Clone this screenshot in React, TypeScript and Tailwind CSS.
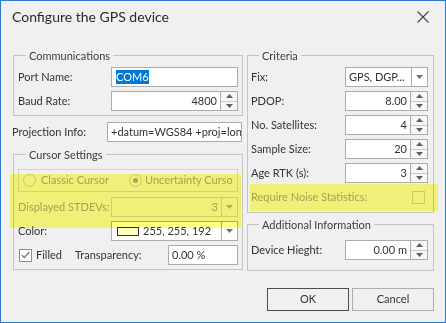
import React from "react";

const Up = () => (
  <svg width="7" height="4" viewBox="0 0 7 4" className="block">
    <path d="M0 4 L3.5 0 L7 4 Z" fill="#606060" />
  </svg>
);
const Down = ({ color = "#606060" }: { color?: string }) => (
  <svg width="7" height="4" viewBox="0 0 7 4" className="block">
    <path d="M0 0 L7 0 L3.5 4 Z" fill={color} />
  </svg>
);

function Spin({ value, w }: { value: string; w: string }) {
  return (
    <div className={`flex h-[20px] ${w}`}>
      <div className="flex-1 border border-[#acacac] bg-white pr-[3px] text-right leading-[18px]">{value}</div>
      <div className="flex w-[17px] flex-col border border-l-0 border-[#acacac] bg-[#f7f7f7]">
        <div className="flex flex-1 items-center justify-center border-b border-[#c8c8c8]">
          <Up />
        </div>
        <div className="flex flex-1 items-center justify-center">
          <Down />
        </div>
      </div>
    </div>
  );
}

function Combo({ children, w, disabled }: { children: React.ReactNode; w: string; disabled?: boolean }) {
  return (
    <div className={`flex h-[20px] ${w} border ${disabled ? "border-[#cfcfcf] bg-[#f0f0f0]" : "border-[#acacac] bg-white"}`}>
      <div className="flex min-w-0 flex-1 items-center overflow-hidden whitespace-nowrap">{children}</div>
      <div className={`flex w-[16px] items-center justify-center border-l ${disabled ? "border-[#cfcfcf]" : "border-[#acacac]"}`}>
        <Down color={disabled ? "#b0b0b0" : "#707070"} />
      </div>
    </div>
  );
}

function Row({ label, children, labelW }: { label: string; children: React.ReactNode; labelW: string }) {
  return (
    <div className="flex h-[20px] items-center">
      <div className={`${labelW} shrink-0`}>{label}</div>
      {children}
    </div>
  );
}

function Group({ title, children, className = "" }: { title: string; children: React.ReactNode; className?: string }) {
  return (
    <fieldset className={`min-w-0 border border-[#c4c4c4] ${className}`}>
      <legend className="ml-[8px] px-[3px] leading-[15px] text-[#3c3c3c]">{title}</legend>
      {children}
    </fieldset>
  );
}

export default function App() {
  return (
    <div
      className="relative h-[323px] w-[446px] overflow-hidden border border-[#2b7bd4] bg-[#f0f0f0] text-[11px] text-[#333333]"
      style={{ fontFamily: "Lato, sans-serif" }}
    >
      {/* title bar */}
      <div className="flex h-[31px] items-center justify-between pl-[11px] pr-[16px]">
        <div className="text-[14px] text-[#2a2a2a]">Configure the GPS device</div>
        <svg width="12" height="12" viewBox="0 0 12 12">
          <path d="M0.5 0.5 L11.5 11.5 M11.5 0.5 L0.5 11.5" stroke="#444" strokeWidth="1.1" />
        </svg>
      </div>

      <div className="grid grid-cols-[230px_187px] gap-x-[4px] pl-[12px] pt-[16px]">
        {/* left column */}
        <div className="flex flex-col">
          <Group title="Communications" className="px-[4px] pb-[4px] pt-[4px]">
            <div className="flex flex-col gap-[4px]">
              <Row label="Port Name:" labelW="w-[93px]">
                <div className="flex h-[20px] w-[127px] items-center border border-[#acacac] bg-white pl-[4px]">
                  <span className="bg-[#0078d7] leading-[14px] text-white">COM6</span>
                </div>
              </Row>
              <Row label="Baud Rate:" labelW="w-[93px]">
                <Spin value="4800" w="w-[127px]" />
              </Row>
            </div>
          </Group>

          <div className="-ml-px mt-[6px] flex h-[20px] items-center">
            <div className="w-[95px] shrink-0">Projection Info:</div>
            <div className="h-[20px] w-[135px] overflow-hidden whitespace-nowrap border border-[#acacac] bg-white pl-[3px] leading-[18px]">
              +datum=WGS84 +proj=longlat
            </div>
          </div>

          <Group title="Cursor Settings" className="relative mt-[5px] px-[4px] pb-[4px] pt-[7px]">
            <div className="flex flex-col">
              <div className="flex h-[23px] w-[220px] items-center overflow-hidden whitespace-nowrap border border-[#d3d3d3] text-[#a3a3a3]">
                <div className="ml-[4px] flex w-[106px] shrink-0 items-center gap-[5px]">
                  <span className="h-[13px] w-[13px] shrink-0 rounded-full border border-[#c8c8c8] bg-[#f0f0f0]" />
                  <span>Classic Cursor</span>
                </div>
                <div className="mr-[4px] flex min-w-0 flex-1 items-center gap-[3px] overflow-hidden">
                  <span className="flex h-[13px] w-[13px] shrink-0 items-center justify-center rounded-full border border-[#c8c8c8] bg-[#f0f0f0]">
                    <span className="h-[5px] w-[5px] rounded-full bg-[#a8a8a8]" />
                  </span>
                  <span>Uncertainty Cursor</span>
                </div>
              </div>
              <div className="mt-[5px] flex flex-col gap-[4px]">
                <div className="flex h-[20px] items-center text-[#a3a3a3]">
                  <div className="w-[93px] shrink-0">Displayed STDEVs:</div>
                  <Combo w="w-[127px]" disabled>
                    <span className="w-full pr-[3px] text-right">3</span>
                  </Combo>
                </div>
                <Row label="Color:" labelW="w-[93px]">
                  <Combo w="w-[127px]">
                    <span className="ml-[5px] h-[9px] w-[22px] shrink-0 border border-[#333] bg-[#ffffc0]" />
                    <span className="ml-[4px] text-[#333]">255, 255, 192</span>
                  </Combo>
                </Row>
                <div className="flex h-[20px] items-center">
                  <span className="ml-[1px] flex h-[13px] w-[13px] items-center justify-center border border-[#8c8c8c] bg-white">
                    <svg width="9" height="8" viewBox="0 0 9 8">
                      <path d="M0.8 4.2 L3.3 6.7 L8.3 0.8" stroke="#6a6a6a" strokeWidth="1.2" fill="none" />
                    </svg>
                  </span>
                  <span className="ml-[4px] w-[39px]">Filled</span>
                  <span className="w-[93px]">Transparency:</span>
                  <div className="h-[20px] w-[70px] border border-[#acacac] bg-white pl-[3px] leading-[18px]">0.00 %</div>
                </div>
              </div>
            </div>
            <div className="pointer-events-none absolute left-[-4px] top-[12px] h-[54px] w-[231px] bg-[#ffff80] mix-blend-multiply" />
          </Group>
        </div>

        {/* right column */}
        <div className="flex flex-col">
          <Group title="Criteria" className="relative pb-[5px] pl-[3px] pr-[5px] pt-[4px]">
            <div className="flex flex-col gap-[4px]">
              <Row label="Fix:" labelW="w-[94px]">
                <Combo w="w-[83px]">
                  <span className="pl-[3px]">GPS, DGP...</span>
                </Combo>
              </Row>
              <Row label="PDOP:" labelW="w-[94px]">
                <Spin value="8.00" w="w-[83px]" />
              </Row>
              <Row label="No. Satellites:" labelW="w-[94px]">
                <Spin value="4" w="w-[83px]" />
              </Row>
              <Row label="Sample Size:" labelW="w-[94px]">
                <Spin value="20" w="w-[83px]" />
              </Row>
              <Row label="Age RTK (s):" labelW="w-[94px]">
                <Spin value="3" w="w-[83px]" />
              </Row>
              <div className="flex h-[20px] items-center justify-between text-[#a3a3a3]">
                <span>Require Noise Statistics:</span>
                <span className="mr-[3px] h-[13px] w-[13px] border border-[#c8c8c8] bg-[#f0f0f0]" />
              </div>
            </div>
            <div className="pointer-events-none absolute left-[2px] top-[121px] h-[27px] w-[188px] bg-[#ffff80] mix-blend-multiply" />
          </Group>

          <Group title="Additional Information" className="mt-[4px] pb-[10px] pl-[3px] pr-[5px] pt-[8px]">
            <Row label="Device Hieght:" labelW="w-[94px]">
              <Spin value="0.00 m" w="w-[83px]" />
            </Row>
          </Group>

          <div className="mt-[17px] flex justify-end gap-[3px]">
            <button className="h-[23px] w-[82px] border border-[#4d4d4d] bg-[#f0f0f0] text-[11px] text-[#333]">OK</button>
            <button className="h-[23px] w-[82px] border border-[#adadad] bg-[#f0f0f0] text-[11px] text-[#333]">Cancel</button>
          </div>
        </div>
      </div>
    </div>
  );
}
